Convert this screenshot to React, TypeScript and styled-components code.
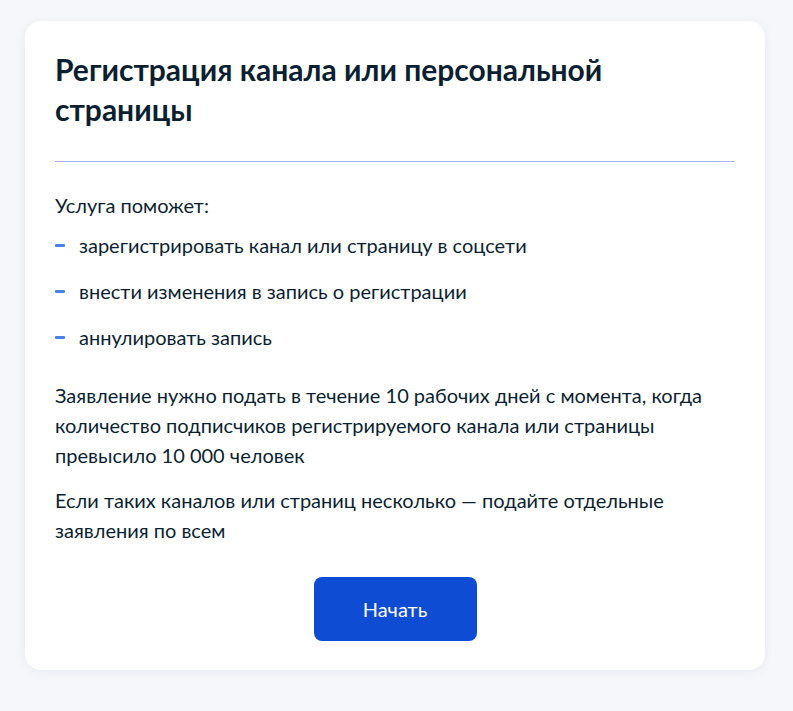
import React from 'react'
import styled, { createGlobalStyle } from 'styled-components'

const GlobalStyle = createGlobalStyle`
    html, body {
        margin: 0;
        padding: 0;
        background: #f5f7fb;
        font-family: Lato, "Noto Sans", Arial, sans-serif;
        color: #0b1f33;
    }
`;

const items = [
    'зарегистрировать канал или страницу в соцсети',
    'внести изменения в запись о регистрации',
    'аннулировать запись',
];

const App = () => {
  return (
    <>
      <GlobalStyle/>
      <PageStyle>
        <CardStyle>
            <h1 className='title'>Регистрация канала или персональной страницы</h1>
            <div className='divider'/>
            <p className='lead'>Услуга поможет:</p>
            <ul className='list'>
                {items.map((item) => (
                    <li key={item}>{item}</li>
                ))}
            </ul>
            <p className='text first'>
                Заявление нужно подать в течение 10 рабочих дней с момента, когда
                количество подписчиков регистрируемого канала или страницы
                превысило 10&nbsp;000 человек
            </p>
            <p className='text'>
                Если таких каналов или страниц несколько — подайте отдельные
                заявления по всем
            </p>
            <div className='actions'>
                <StartButton type='button'>Начать</StartButton>
            </div>
        </CardStyle>
      </PageStyle>
    </>
  )
}

const PageStyle = styled.div`
    min-height: 711px;
    box-sizing: border-box;
    padding: 21px 0 0 25px;
`;

const CardStyle = styled.div`
    width: 740px;
    box-sizing: border-box;
    padding: 28px 30px 29px 30px;
    background: #ffffff;
    border-radius: 16px;
    box-shadow: 0 2px 12px rgba(11, 31, 51, 0.06);

    .title {
        font-size: 30px;
        line-height: 40px;
        font-weight: 700;
        margin: 0;
        max-width: 620px;
    }

    .divider {
        height: 1px;
        background: #a3b5ea;
        margin: 32px 0 28px 0;
    }

    .lead, .text {
        font-size: 20px;
        line-height: 30px;
        margin: 0;
    }

    .text {
        margin-top: 15px;
    }

    .text.first {
        margin-top: 28px;
    }

    .list {
        list-style: none;
        margin: 10px 0 0 0;
        padding: 0;
        display: flex;
        flex-direction: column;
        gap: 16px;

        li {
            position: relative;
            padding-left: 24px;
            font-size: 20px;
            line-height: 30px;
        }

        li::before {
            content: '';
            position: absolute;
            left: 0;
            top: 14px;
            width: 10px;
            height: 3px;
            border-radius: 1px;
            background: #4b7ff0;
        }
    }

    .actions {
        display: flex;
        justify-content: center;
        margin-top: 32px;
    }
`;

const StartButton = styled.button`
    height: 64px;
    min-width: 163px;
    padding: 0 48px;
    border: none;
    border-radius: 8px;
    background: #0d4cd3;
    color: #ffffff;
    font-family: Lato, "Noto Sans", Arial, sans-serif;
    font-size: 20px;
    line-height: 24px;
    cursor: pointer;
`;

export default App
